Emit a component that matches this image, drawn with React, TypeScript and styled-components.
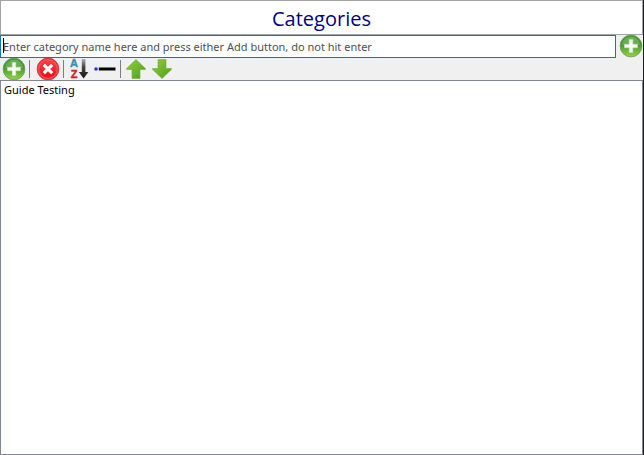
import React, { useState } from "react";
import styled, { createGlobalStyle } from "styled-components";

const GlobalStyle = createGlobalStyle`
  *, *::before, *::after { box-sizing: border-box; }
  html, body, #root { height: 100%; }
  body {
    margin: 0;
    overflow: hidden;
    background: #f0f0f0;
    font-family: "Noto Sans", "Open Sans", sans-serif;
    font-size: 11px;
  }
`;

const Panel = styled.main`
  display: flex;
  flex-direction: column;
  height: 100%;
  border-right: 1px solid #1c1c1f;
`;

const Header = styled.header`
  height: 35px;
  border: 1px solid #a3a3a8;
  background: #fff;
`;

const Title = styled.h1`
  margin: 0;
  color: #000080;
  font-family: "Open Sans", "Noto Sans", sans-serif;
  font-size: 20px;
  font-weight: 400;
  line-height: 36px;
  text-align: center;
`;

const EntryRow = styled.form`
  display: flex;
  height: 23px;
`;

const Field = styled.div`
  position: relative;
  flex: 1;
  min-width: 0;
`;

const NameInput = styled.input`
  display: block;
  width: 100%;
  height: 23px;
  padding: 0 2px;
  border: 1px solid #0877c8;
  border-radius: 0;
  outline: none;
  background: #fff;
  color: #000;
  font: inherit;
  caret-color: transparent;
  &::placeholder { color: #505050; opacity: 1; }
`;

const Caret = styled.span`
  position: absolute;
  top: 3px;
  left: 3px;
  width: 1px;
  height: 15px;
  background: #000;
`;

const IconButton = styled.button<{ $width: number; $align?: string }>`
  display: flex;
  align-items: center;
  justify-content: ${(p) => p.$align ?? "center"};
  flex: none;
  width: ${(p) => p.$width}px;
  height: 22px;
  padding: 0;
  border: 0;
  background: transparent;
  svg { display: block; flex: none; }
`;

const Toolbar = styled.div`
  display: flex;
  align-items: center;
  height: 22px;
  padding-left: 1px;
`;

const Separator = styled.span<{ $before: number; $after: number }>`
  width: 1px;
  height: 18px;
  margin: 0 ${(p) => p.$after}px 0 ${(p) => p.$before}px;
  background: #7c7c7c;
`;

const CategoryList = styled.ul`
  flex: 1;
  min-height: 0;
  margin: 0;
  padding: 1px 3px;
  border: 1px solid #828790;
  background: #fff;
  list-style: none;
`;

const CategoryItem = styled.li`
  color: #000;
  line-height: 16px;
`;

function AddIcon({ id }: { id: string }) {
  return (
    <svg width="24" height="24" viewBox="0 0 24 24" aria-hidden="true">
      <defs>
        <linearGradient id={id} x1="0" y1="0" x2="0" y2="1">
          <stop offset="0" stopColor="#4c9d33" />
          <stop offset="0.4" stopColor="#3f9528" />
          <stop offset="0.55" stopColor="#55a62f" />
          <stop offset="1" stopColor="#9bd052" />
        </linearGradient>
      </defs>
      <circle cx="12" cy="12" r="10.9" fill={`url(#${id})`} stroke="#6a9d5c" strokeWidth="0.8" />
      <path d="M2.6 10.5a9.6 9.6 0 0 1 18.8 0Q12 14 2.6 10.5Z" fill="#fff" opacity="0.2" />
      <path d="M10.2 5.5h3.6v4.7h4.7v3.6h-4.7v4.7h-3.6v-4.7H5.5v-3.6h4.7Z" fill="#fbfff7" stroke="#c5dfb6" strokeWidth="0.6" />
    </svg>
  );
}

function DeleteIcon() {
  return (
    <svg width="24" height="24" viewBox="0 0 24 24" aria-hidden="true">
      <defs>
        <linearGradient id="delete-fill" x1="0" y1="0" x2="0" y2="1">
          <stop offset="0" stopColor="#f04448" />
          <stop offset="1" stopColor="#e90f18" />
        </linearGradient>
      </defs>
      <circle cx="12" cy="12" r="10.9" fill="#ec3a3e" stroke="#ce3338" strokeWidth="0.8" />
      <circle cx="12" cy="12" r="9.2" fill="url(#delete-fill)" stroke="#f47478" strokeWidth="0.6" />
      <path d="m7.8 7.8 8.4 8.4m0-8.4-8.4 8.4" stroke="#fff" strokeWidth="3.1" />
    </svg>
  );
}

function SortIcon() {
  return (
    <svg width="20" height="22" viewBox="0 0 20 22" aria-hidden="true">
      <defs>
        <linearGradient id="arrow-fade" gradientUnits="userSpaceOnUse" x1="0" y1="0" x2="0" y2="20">
          <stop offset="0" stopColor="#bbb" />
          <stop offset="0.45" stopColor="#444" />
          <stop offset="1" stopColor="#181818" />
        </linearGradient>
      </defs>
      <text x="5" y="9" textAnchor="middle" fontFamily="Liberation Sans" fontSize="11" fontWeight="700" fill="#398eac" stroke="#398eac" strokeWidth="0.4">A</text>
      <text x="5" y="20" textAnchor="middle" fontFamily="Liberation Sans" fontSize="11" fontWeight="700" fill="#ca2525" stroke="#ca2525" strokeWidth="0.4">Z</text>
      <path d="M12.8 1h3.6v13h3L14.6 20.5 9.8 14h3Z" fill="url(#arrow-fade)" />
    </svg>
  );
}

function LineIcon() {
  return (
    <svg width="22" height="8" viewBox="0 0 22 8" aria-hidden="true">
      <circle cx="2" cy="4" r="1.8" fill="#2035dc" />
      <path d="M4.8 4h16.7" stroke="#050505" strokeWidth="3" />
    </svg>
  );
}

function MoveIcon({ id, down = false }: { id: string; down?: boolean }) {
  return (
    <svg width="20" height="20" viewBox="0 0 20 20" aria-hidden="true">
      <defs>
        <linearGradient id={id} x1="0" y1="0" x2="1" y2="1">
          <stop offset="0" stopColor="#90cc3a" />
          <stop offset="0.55" stopColor="#6db52c" />
          <stop offset="1" stopColor="#4a9722" />
        </linearGradient>
      </defs>
      <path
        d={down
          ? "M6 .5h8v9h5.4v1L10 19.5.6 10.5v-1H6Z"
          : "M6 19.5h8v-9h5.4v-1L10 .5.6 9.5v1H6Z"}
        fill={`url(#${id})`}
        stroke="#72ad42"
        strokeWidth="0.6"
      />
    </svg>
  );
}

export default function App() {
  const [name, setName] = useState("");
  const [categories, setCategories] = useState(["Guide Testing"]);

  const add = () => {
    if (!name.trim()) return;
    setCategories([...categories, name.trim()]);
    setName("");
  };

  return (
    <>
      <GlobalStyle />
      <Panel>
        <Header>
          <Title>Categories</Title>
        </Header>
        <EntryRow onSubmit={(e) => e.preventDefault()}>
          <Field>
            <NameInput
              type="text"
              aria-label="Category name"
              placeholder="Enter category name here and press either Add button, do not hit enter"
              value={name}
              onChange={(e) => setName(e.target.value)}
            />
            {name === "" && <Caret />}
          </Field>
          <IconButton $width={27} $align="flex-end" type="button" aria-label="Add category" onClick={add}>
            <AddIcon id="add-entry" />
          </IconButton>
        </EntryRow>
        <Toolbar role="toolbar" aria-label="Category actions">
          <IconButton $width={26} type="button" aria-label="Add" onClick={add}>
            <AddIcon id="add-tool" />
          </IconButton>
          <Separator $before={2} $after={5} />
          <IconButton $width={26} type="button" aria-label="Delete"><DeleteIcon /></IconButton>
          <Separator $before={2} $after={2} />
          <IconButton $width={26} type="button" aria-label="Sort alphabetically"><SortIcon /></IconButton>
          <IconButton $width={26} type="button" aria-label="Insert separator"><LineIcon /></IconButton>
          <Separator $before={2} $after={2} />
          <IconButton $width={26} type="button" aria-label="Move up"><MoveIcon id="move-up" /></IconButton>
          <IconButton $width={26} type="button" aria-label="Move down"><MoveIcon id="move-down" down /></IconButton>
        </Toolbar>
        <CategoryList aria-label="Categories">
          {categories.map((c) => (
            <CategoryItem key={c}>{c}</CategoryItem>
          ))}
        </CategoryList>
      </Panel>
    </>
  );
}
